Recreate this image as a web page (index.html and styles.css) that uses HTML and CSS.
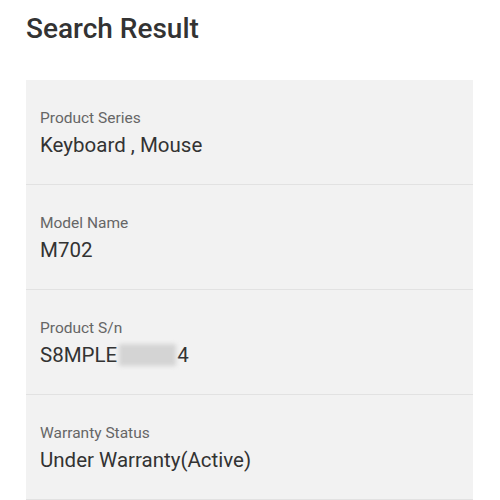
FILE: index.html
```html
<!DOCTYPE html>
<html lang="en">
<head>
    <meta charset="UTF-8">
    <meta name="viewport" content="width=device-width, initial-scale=1.0">
    <title>Search Result</title>
    <link rel="stylesheet" href="styles.css">
</head>
<body>
    <div class="page">
        <div class="title">Search Result</div>

        <div class="result-card">
            <div class="row">
                <div class="label">Product Series</div>
                <div class="value">Keyboard , Mouse</div>
            </div>
            <div class="row">
                <div class="label">Model Name</div>
                <div class="value">M702</div>
            </div>
            <div class="row">
                <div class="label">Product S/n</div>
                <div class="value">S8MPLE<span class="masked"></span>4</div>
            </div>
            <div class="row">
                <div class="label">Warranty Status</div>
                <div class="value">Under Warranty(Active)</div>
            </div>
        </div>
    </div>
</body>
</html>
```

FILE: styles.css
```css
body {
    margin: 0;
    font-family: Roboto, 'Noto Sans', sans-serif;
    background: #fff;
}
.page {
    padding: 12px 27px 0 26px;
}
.title {
    font-size: 28px;
    line-height: 34px;
    font-weight: 500;
    color: #333;
    margin-bottom: 34px;
}
.result-card {
    background: #f2f2f2;
}
.row {
    padding: 29px 14px 27.5px 14px;
    border-bottom: 1px solid #e2e2e2;
}
.label {
    font-size: 15.5px;
    line-height: 18px;
    color: #666;
    margin-bottom: 5.5px;
}
.value {
    font-size: 20.5px;
    line-height: 24px;
    color: #333;
}

/* blurred part of the serial number */
.masked {
    display: inline-block;
    width: 57px;
    height: 22px;
    vertical-align: -4px;
    margin: 0 1px 0 2px;
    background: #d4d4d4;
    filter: blur(2px);
}
```
